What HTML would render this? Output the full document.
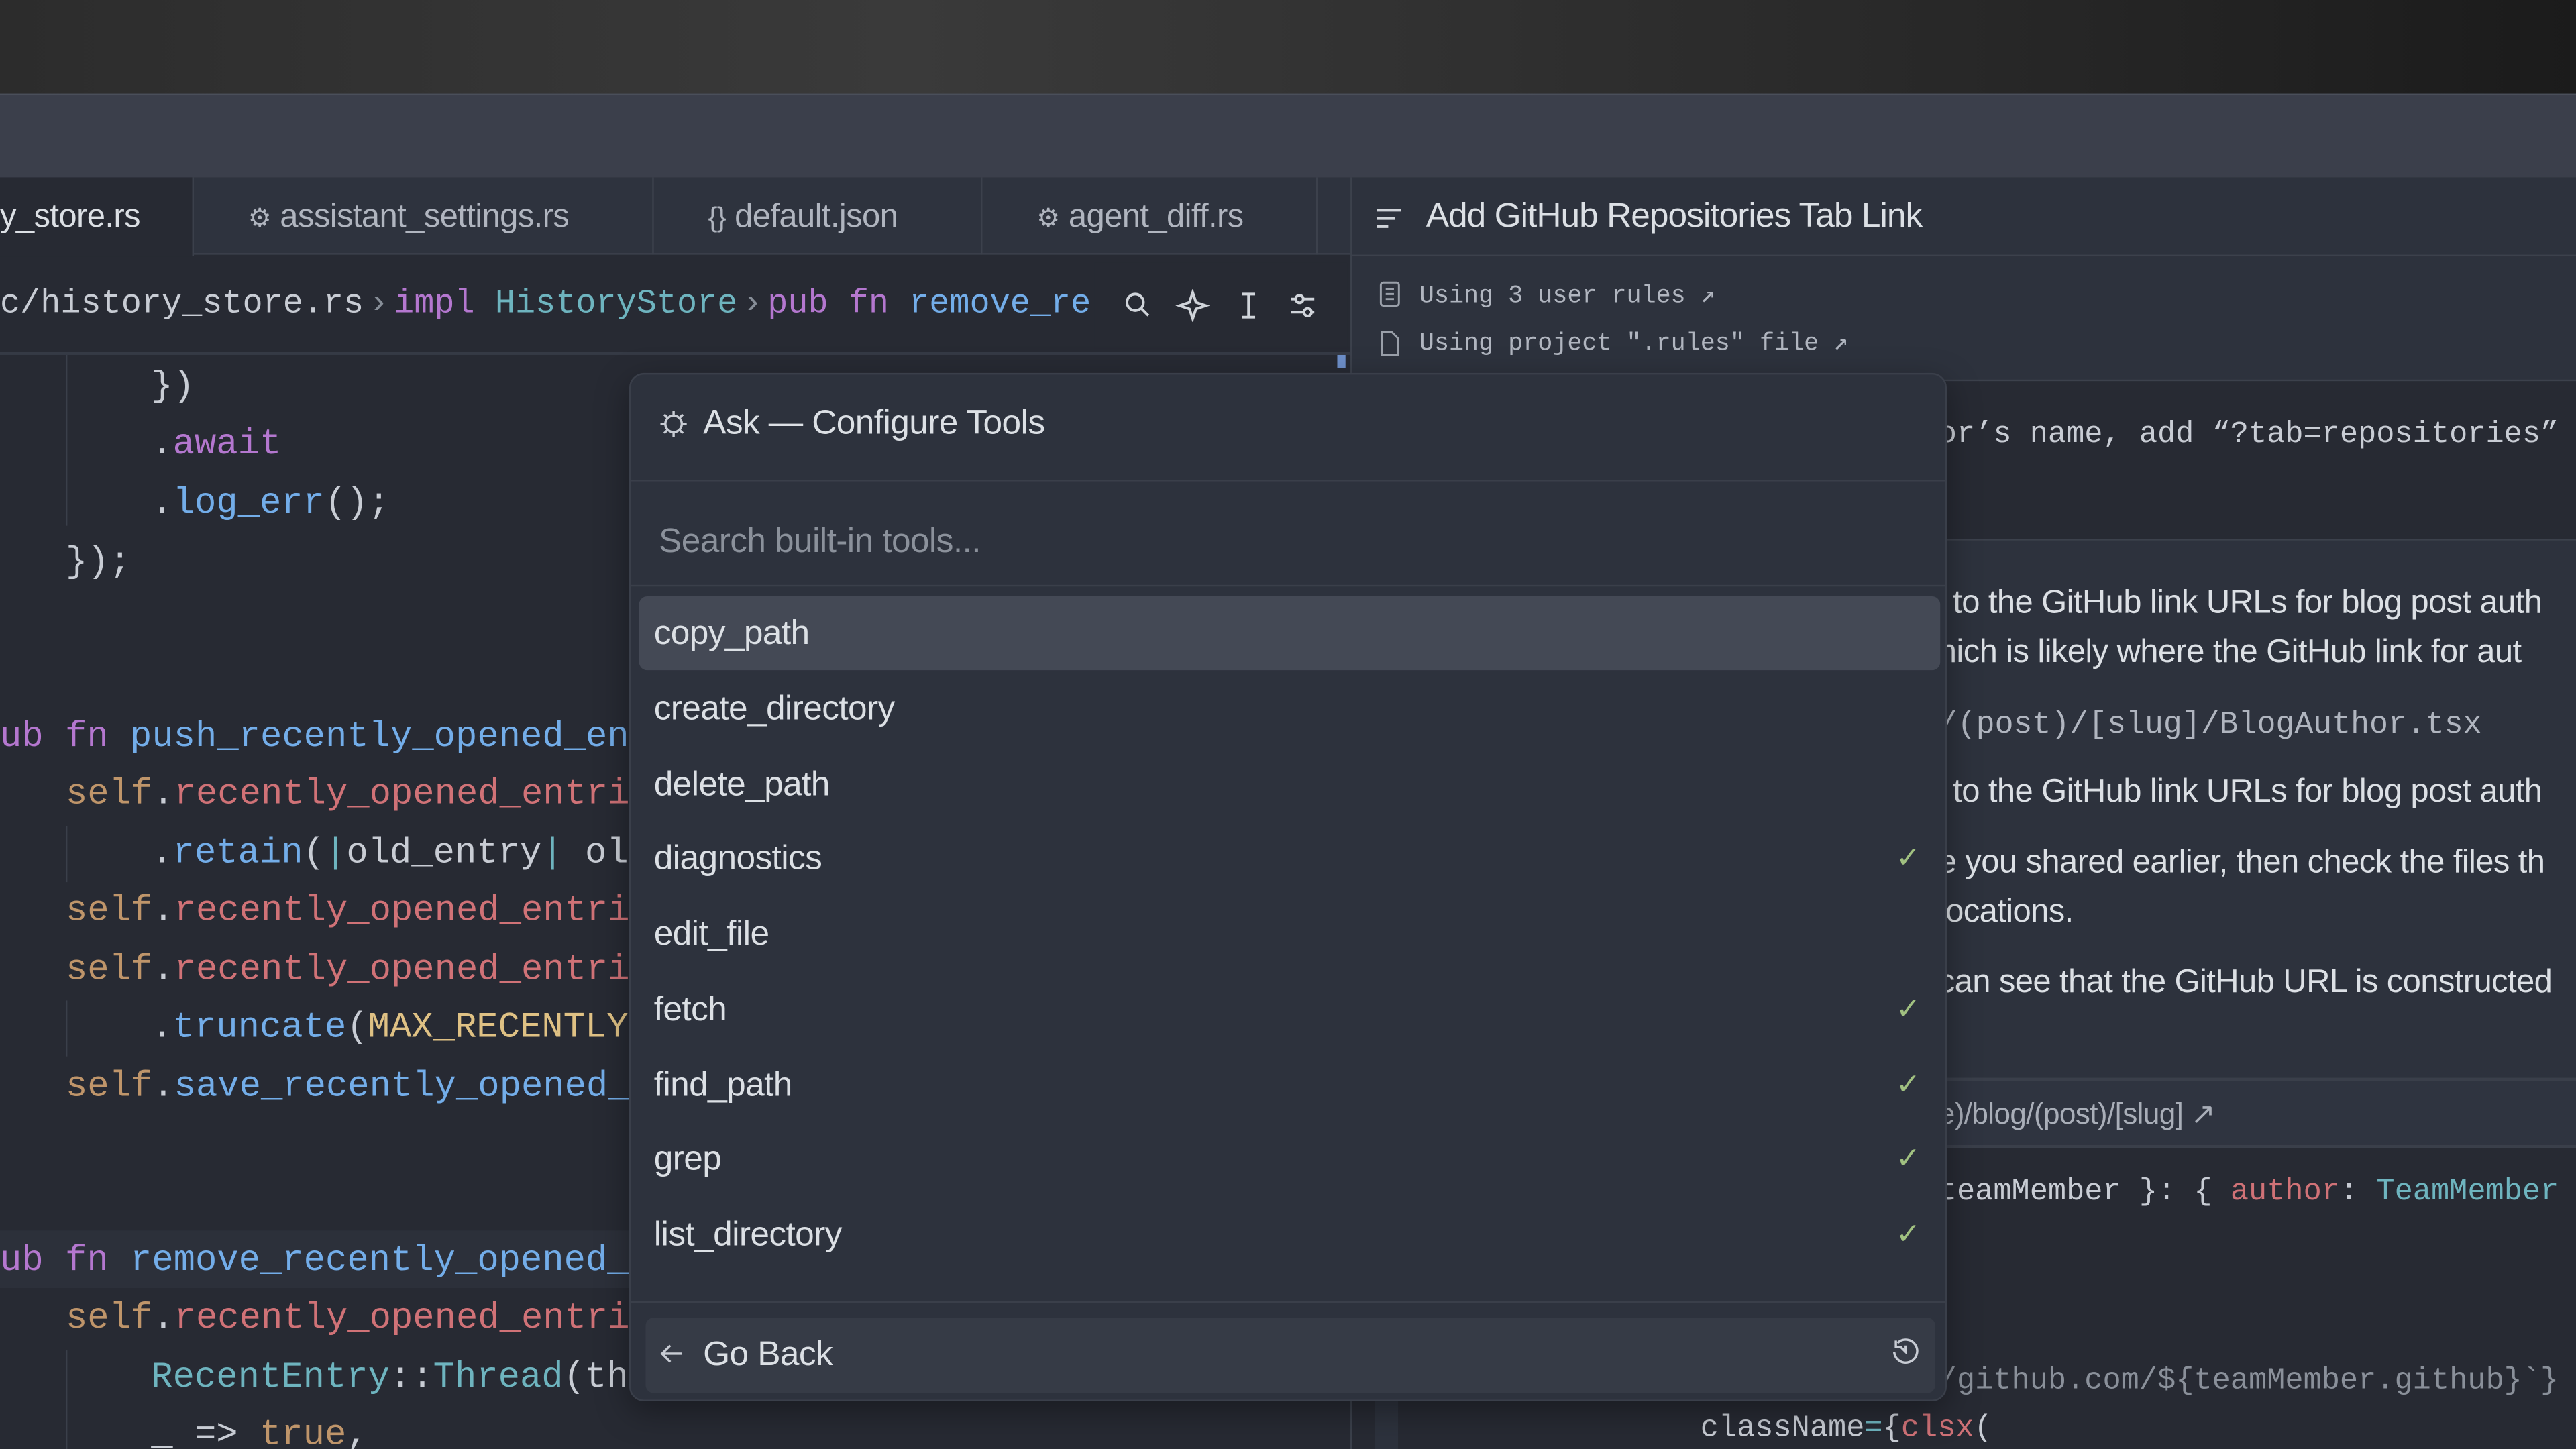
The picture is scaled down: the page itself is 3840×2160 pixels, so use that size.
<!DOCTYPE html>
<html><head><meta charset="utf-8"><style>
html,body{margin:0;padding:0;width:3840px;height:2160px;overflow:hidden;background:#272a33}
#s{position:absolute;left:0;top:0;width:1568px;height:882px;transform:scale(2.44898);transform-origin:0 0;overflow:hidden;background:#272a33;font-family:"Liberation Sans",sans-serif}
.a{position:absolute;white-space:pre}
.m{font-family:"Liberation Mono",monospace;font-size:22px;line-height:36px}
.sn{font-size:20px;line-height:30px;color:#dce0e5;letter-spacing:-0.25px}
.w{color:#c8ccd4}.k{color:#b477cf}.f{color:#73ade9}.r{color:#d07277}.y{color:#dfc184}.o{color:#bf956a}.c{color:#6eb4bf}.g{color:#878e98}
.cd{margin-top:2px}
.sep{margin:0 3px}
</style></head><body><div id="s">
<div class="a" style="left:0;top:0;width:1568px;height:57px;background:linear-gradient(90deg,#2c2c2c,#3a3a3a 35%,#262626 80%,#1b1b1b)"></div>
<div class="a" style="left:0;top:57px;width:1568px;height:51px;background:#3b3f4b;border-top:1px solid #4a4f5a;box-sizing:border-box"></div>
<div class="a" style="left:0;top:108px;width:822px;height:47px;background:#2e333e;border-bottom:1px solid #3c414c;box-sizing:border-box"></div>
<div class="a" style="left:0;top:108px;width:117px;height:48px;background:#272a33;border-right:1px solid #3c414c"></div>
<div class="a sn" style="left:0;top:117px">y_store.rs</div>
<div class="a" style="left:397px;top:108px;width:1px;height:47px;background:#3c414c"></div>
<div class="a" style="left:597px;top:108px;width:1px;height:47px;background:#3c414c"></div>
<div class="a" style="left:801px;top:108px;width:1px;height:47px;background:#3c414c"></div>
<div class="a sn" style="left:151px;top:117px;color:#b0b5bf"><span style="font-size:16px">⚙</span> assistant_settings.rs</div>
<div class="a sn" style="left:431px;top:117px;color:#b0b5bf"><span style="font-size:17px">{}</span> default.json</div>
<div class="a sn" style="left:631px;top:117px;color:#b0b5bf"><span style="font-size:16px">⚙</span> agent_diff.rs</div>
<div class="a m" style="left:0;top:168px;font-size:20.5px"><span class="w">c/history_store.rs</span><span class="g sep">›</span><span class="k">impl</span> <span class="c">HistoryStore</span><span class="g sep">›</span><span class="k">pub fn</span> <span class="f">remove_re</span></div>
<div class="a" style="left:666px;top:160px;width:154px;height:52px;background:#272a33"></div>
<svg class="a" style="left:682px;top:176px" width="125" height="20" viewBox="0 0 125 20" fill="none" stroke="#d0d4da" stroke-width="1.6"><circle cx="9" cy="8" r="5"/><path d="M13 12l4 4"/><path d="M44 2l2 6 6 2-6 2-2 6-2-6-6-2 6-2z"/><path d="M74 3h8M78 3v14M74 17h8"/><path d="M104 6h14M104 14h14"/><circle cx="109" cy="6" r="2.3" fill="#272a33"/><circle cx="114" cy="14" r="2.3" fill="#272a33"/></svg>
<div class="a" style="left:0;top:214px;width:822px;height:2px;background:#353a45"></div>
<div class="a" style="left:40px;top:216px;width:1px;height:104px;background:#3a3f4a"></div>
<div class="a" style="left:40px;top:503px;width:1px;height:34px;background:#3a3f4a"></div>
<div class="a" style="left:40px;top:609px;width:1px;height:34px;background:#3a3f4a"></div>
<div class="a" style="left:40px;top:822px;width:1px;height:60px;background:#3a3f4a"></div>
<div class="a" style="left:0;top:749px;width:822px;height:35px;background:#2c303a"></div>
<div class="a m w cd" style="left:92px;top:216px">})</div>
<div class="a m cd" style="left:92px;top:251px"><span class="w">.</span><span class="k">await</span></div>
<div class="a m cd" style="left:92px;top:287px"><span class="w">.</span><span class="f">log_err</span><span class="w">();</span></div>
<div class="a m w cd" style="left:40px;top:323px">});</div>
<div class="a m cd" style="left:0;top:429px"><span class="k">ub fn</span> <span class="f">push_recently_opened_en</span></div>
<div class="a m cd" style="left:40px;top:464px"><span class="o">self</span><span class="w">.</span><span class="r">recently_opened_entri</span></div>
<div class="a m cd" style="left:92px;top:500px"><span class="w">.</span><span class="f">retain</span><span class="w">(</span><span class="c">|</span><span class="w">old_entry</span><span class="c">|</span> <span class="w">ol</span></div>
<div class="a m cd" style="left:40px;top:535px"><span class="o">self</span><span class="w">.</span><span class="r">recently_opened_entri</span></div>
<div class="a m cd" style="left:40px;top:571px"><span class="o">self</span><span class="w">.</span><span class="r">recently_opened_entri</span></div>
<div class="a m cd" style="left:92px;top:606px"><span class="w">.</span><span class="f">truncate</span><span class="w">(</span><span class="y">MAX_RECENTLY</span></div>
<div class="a m cd" style="left:40px;top:642px"><span class="o">self</span><span class="w">.</span><span class="f">save_recently_opened_</span></div>
<div class="a m cd" style="left:0;top:748px"><span class="k">ub fn</span> <span class="f">remove_recently_opened_</span></div>
<div class="a m cd" style="left:40px;top:783px"><span class="o">self</span><span class="w">.</span><span class="r">recently_opened_entri</span></div>
<div class="a m cd" style="left:92px;top:819px"><span class="c">RecentEntry</span><span class="w">::</span><span class="c">Thread</span><span class="w">(th</span></div>
<div class="a m cd" style="left:92px;top:854px"><span class="w">_ =&gt; </span><span class="o">true</span><span class="w">,</span></div>
<div class="a" style="left:814px;top:216px;width:5px;height:8px;background:#6d8fc9"></div>
<div class="a" style="left:822px;top:108px;width:746px;height:774px;background:#2d323d;border-left:1px solid #3c414c"></div>
<div class="a" style="left:823px;top:155px;width:745px;height:1px;background:#3c414c"></div>
<svg class="a" style="left:837px;top:125px" width="18" height="16" viewBox="0 0 18 16" stroke="#d0d4da" stroke-width="1.6"><path d="M1 3h15M1 8h11M1 13h7"/></svg>
<div class="a sn" style="left:868px;top:117px;font-size:21px;letter-spacing:-0.4px">Add GitHub Repositories Tab Link</div>
<svg class="a" style="left:839px;top:171px" width="16" height="56" viewBox="0 0 16 56" fill="none" stroke="#9aa0aa" stroke-width="1.2"><rect x="1.5" y="1" width="11" height="14" rx="1.5"/><path d="M4.5 5h5M4.5 8h5M4.5 11h5"/><path d="M2 31h6l4 4v10H2z"/></svg>
<div class="a m" style="left:864px;top:163px;font-size:15px;color:#b0b5bf">Using 3 user rules ↗</div>
<div class="a m" style="left:864px;top:192px;font-size:15px;color:#b0b5bf">Using project ".rules" file ↗</div>
<div class="a" style="left:823px;top:231px;width:745px;height:96px;background:#272a33;border-top:1px solid #3c414c;border-bottom:1px solid #3c414c"></div>
<div class="a m" style="left:1180px;top:247px;font-size:18.5px;color:#c8ccd4">or’s name, add “?tab=repositories” to</div>
<div class="a sn" style="left:1180px;top:352px">’ to the GitHub link URLs for blog post auth</div>
<div class="a sn" style="left:1180px;top:382px">hich is likely where the GitHub link for aut</div>
<div class="a m" style="left:1180px;top:423px;font-size:19px;color:#b0b5bf">/(post)/[slug]/BlogAuthor.tsx</div>
<div class="a sn" style="left:1180px;top:467px">’ to the GitHub link URLs for blog post auth</div>
<div class="a sn" style="left:1180px;top:510px">e you shared earlier, then check the files th</div>
<div class="a sn" style="left:1180px;top:540px">locations.</div>
<div class="a sn" style="left:1180px;top:583px">can see that the GitHub URL is constructed</div>
<div class="a" style="left:823px;top:656px;width:745px;height:43px;background:#2f3440;border-top:2px solid #3a3f4a;border-bottom:2px solid #3a3f4a;box-sizing:border-box"></div>
<div class="a sn" style="left:1180px;top:663px;font-size:18px;color:#a9aeb8">e)/blog/(post)/[slug] ↗</div>
<div class="a" style="left:823px;top:699px;width:745px;height:183px;background:#272a33"></div>
<div class="a" style="left:837px;top:699px;width:14px;height:183px;background:#2d323d"></div>
<div class="a m" style="left:1180px;top:708px;font-size:18.5px"><span class="w">teamMember }: { </span><span class="r">author</span><span class="w">: </span><span class="c">TeamMember</span><span class="w"> }</span></div>
<div class="a m" style="left:1180px;top:823px;font-size:18.5px;color:#8a909a">/github.com/${teamMember.github}`}</div>
<div class="a m" style="left:1035px;top:852px;font-size:18.5px"><span class="w">className</span><span class="c">=</span><span class="w">{</span><span class="r">clsx</span><span class="w">(</span></div>
<div class="a" style="left:383px;top:227px;width:802px;height:626px;background:#2d323d;border:1px solid #3a3f4a;border-radius:9px;box-sizing:border-box;box-shadow:0 6px 20px rgba(0,0,0,.35)"></div>
<svg class="a" style="left:401px;top:249px" width="18" height="18" viewBox="0 0 18 18" fill="none" stroke="#c8ccd4" stroke-width="1.4"><circle cx="9" cy="9" r="5"/><path d="M9 1v3M9 14v3M1 9h3M14 9h3M3.3 3.3l2.1 2.1M12.6 12.6l2.1 2.1M3.3 14.7l2.1-2.1M12.6 5.4l2.1-2.1"/></svg>
<div class="a sn" style="left:428px;top:243px;font-size:21px">Ask — Configure Tools</div>
<div class="a" style="left:384px;top:292px;width:800px;height:1px;background:#3a3f4a"></div>
<div class="a sn" style="left:401px;top:315px;font-size:21px;color:#8b919b">Search built-in tools...</div>
<div class="a" style="left:384px;top:356px;width:800px;height:1px;background:#3a3f4a"></div>
<div class="a" style="left:389px;top:363px;width:792px;height:45px;background:#444955;border-radius:5px"></div>
<div class="a sn" style="left:398px;top:371px;font-size:21px">copy_path</div>
<div class="a sn" style="left:398px;top:417px;font-size:21px">create_directory</div>
<div class="a sn" style="left:398px;top:463px;font-size:21px">delete_path</div>
<div class="a sn" style="left:398px;top:508px;font-size:21px">diagnostics</div>
<div class="a sn" style="left:398px;top:554px;font-size:21px">edit_file</div>
<div class="a sn" style="left:398px;top:600px;font-size:21px">fetch</div>
<div class="a sn" style="left:398px;top:646px;font-size:21px">find_path</div>
<div class="a sn" style="left:398px;top:691px;font-size:21px">grep</div>
<div class="a sn" style="left:398px;top:737px;font-size:21px">list_directory</div>
<div class="a" style="left:1154px;top:509px;color:#a1c181;font-size:18px;line-height:26px">✓</div>
<div class="a" style="left:1154px;top:601px;color:#a1c181;font-size:18px;line-height:26px">✓</div>
<div class="a" style="left:1154px;top:647px;color:#a1c181;font-size:18px;line-height:26px">✓</div>
<div class="a" style="left:1154px;top:692px;color:#a1c181;font-size:18px;line-height:26px">✓</div>
<div class="a" style="left:1154px;top:738px;color:#a1c181;font-size:18px;line-height:26px">✓</div>
<div class="a" style="left:384px;top:792px;width:800px;height:1px;background:#3a3f4a"></div>
<div class="a" style="left:393px;top:802px;width:785px;height:46px;background:#363b46;border-radius:5px"></div>
<svg class="a" style="left:401px;top:816px" width="16" height="16" viewBox="0 0 16 16" fill="none" stroke="#c8ccd4" stroke-width="1.4"><path d="M14 8H2M7 3L2 8l5 5"/></svg>
<div class="a sn" style="left:428px;top:810px;font-size:21px">Go Back</div>
<svg class="a" style="left:1150px;top:813px" width="20" height="20" viewBox="0 0 20 20" fill="none" stroke="#c8ccd4" stroke-width="1.4"><path d="M5 4.5A7 7 0 1 1 3 10"/><path d="M4 3v4h4"/><path d="M10 6v4l-3-3"/></svg>
</div></body></html>
